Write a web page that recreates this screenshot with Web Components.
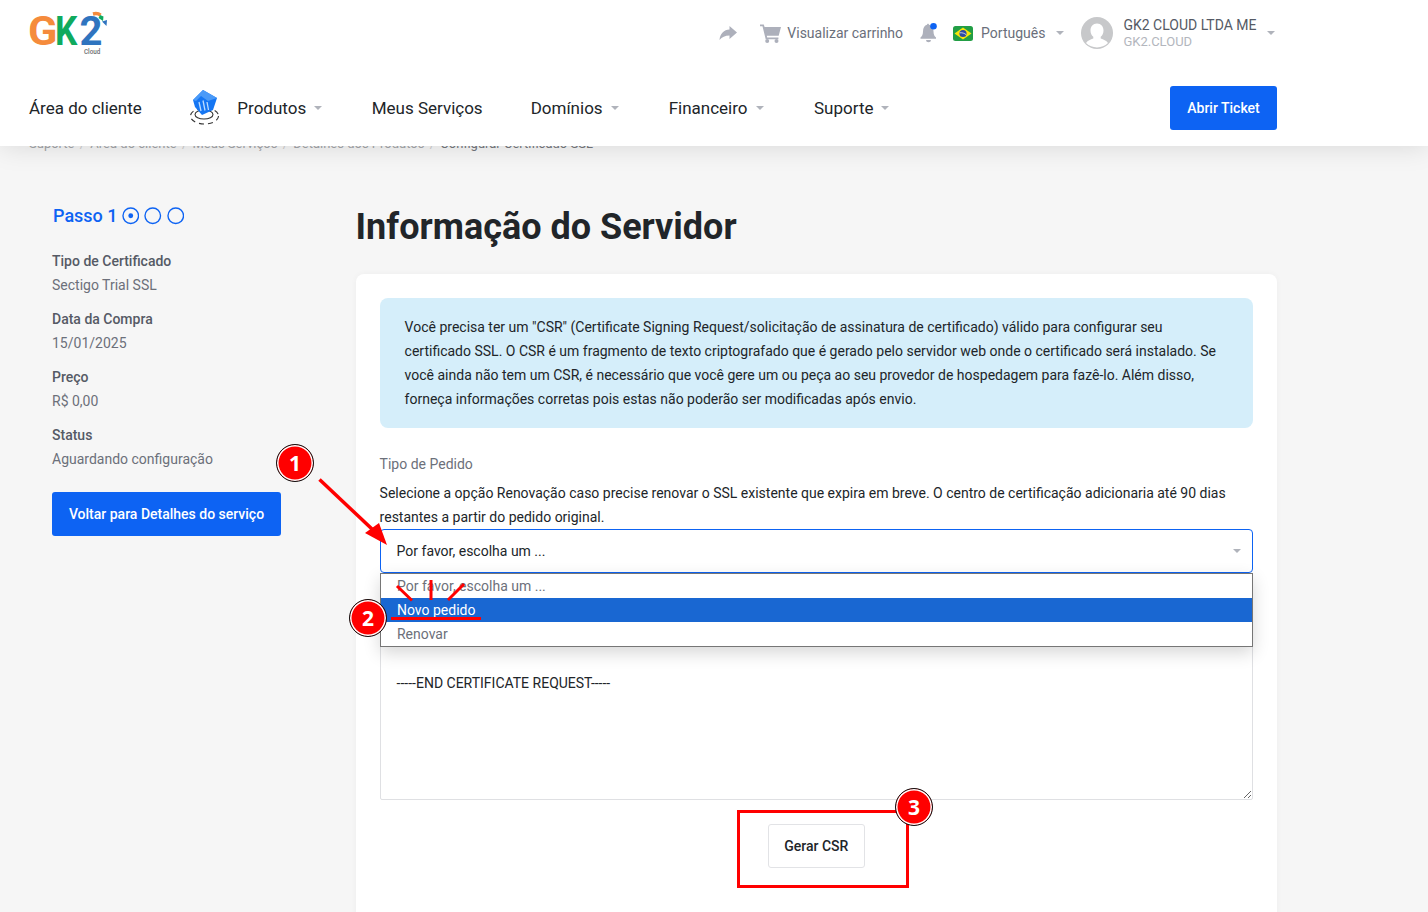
<!DOCTYPE html>
<html lang="pt-BR">
<head>
<meta charset="utf-8">
<title>Informação do Servidor</title>
<style>
html,body{margin:0;padding:0;height:912px;overflow:hidden;background:#f6f6f6;font-family:Roboto,"Liberation Sans",sans-serif;font-size:14px;color:#212529}
</style>
</head>
<body>
<site-header>
  <top-bar slot="top"></top-bar>
  <main-nav slot="nav"></main-nav>
</site-header>
<bread-crumbs></bread-crumbs>
<page-layout>
  <side-panel slot="side"></side-panel>
  <server-form slot="main"></server-form>
</page-layout>
<guide-overlay></guide-overlay>

<script>
function def(name, html){
  customElements.define(name, class extends HTMLElement{
    constructor(){super();this.attachShadow({mode:'open'}).innerHTML=html;}
  });
}
const caret=(c='#b0b3bb')=>`<svg width="8" height="4" viewBox="0 0 8 4" style="display:block"><path d="M0 0h8L4 4z" fill="${c}"/></svg>`;

def('site-header',`<style>
:host{display:block;position:relative;z-index:2;background:#fff;height:146px;box-shadow:0 0 26px rgba(0,0,0,.13)}
.in{width:1248px;margin-left:29px;display:flex;flex-direction:column}
</style><div class="in"><slot name="top"></slot><slot name="nav"></slot></div>`);

def('top-bar',`<style>
:host{display:flex;align-items:flex-start;height:65px;justify-content:space-between;font-size:14px;color:#6a6f7b}
.logo{position:relative;display:block;width:80px;height:56px;margin-top:9px;font:700 40px/28px Roboto,sans-serif;white-space:nowrap}
.word{position:absolute;left:-1.500px;top:9px;display:flex}
.word span{display:block;transform-origin:0 50%}
.g{color:#f58b3c;width:27.500px;transform:scaleX(1.080)}
.k{color:#0faa5e;width:24.500px;transform:scaleX(.88)}
.two{color:#2f74bf}
.cloud{position:absolute;left:55px;top:38.500px;font:500 6.300px/8px Roboto,sans-serif;color:#6d6f72}
.arc{position:absolute;left:64px;top:2px;overflow:visible}
.right{display:flex;align-items:center;height:66px;padding-right:2.500px;box-sizing:border-box}
.i{display:block;flex:none}
.share{margin-right:23px}.cart{margin-right:6px}.bell{margin:0 16px 0 17px}.flag{margin-right:8px}
.c1{margin:0 17px 0 11px}
.ava{margin-right:10px}
.who{display:flex;flex-direction:column;margin-right:10px}
.who b{font-weight:400;font-size:14px;line-height:18px;color:#555a65}
.who span{font-size:13px;line-height:16px;color:#b3b6bd}
</style>
<a class="logo" aria-label="GK2 Cloud">
  <span class="word"><span class="g">G</span><span class="k">K</span><span class="two">2</span></span>
  <svg class="arc" width="15" height="16" viewBox="0 0 15 16"><path d="M0 3c3-.8 5.500-.5 7.500 1.200" fill="none" stroke="#f58b3c" stroke-width="3.500"/><path d="M7 4l3.500 1.500-.5 4.500-4.500-3z" fill="#0faa5e"/><path d="M9 10.500l5-1.500-.5 6z" fill="#2f74bf"/></svg>
  <span class="cloud">Cloud</span>
</a>
<div class="right">
  <svg class="i share" width="18" height="14" viewBox="0 0 18 14"><path d="M10.500 0L18 6.500 10.500 13V9.500C6 9.500 3 11 .5 14 1 8 5 3.500 10.500 3.500z" fill="#adb0bb"/></svg>
  <svg class="i cart" width="21" height="19" viewBox="0 0 21 19"><path d="M0 .500h3.800l.8 2.500H21l-2.300 8.700H6.800l.4 1.800h11.200v1.800H5.700L2.500 2.300H0z" fill="#adb0bb"/><circle cx="7.200" cy="17" r="2" fill="#adb0bb"/><circle cx="16.500" cy="17" r="2" fill="#adb0bb"/></svg>
  <span>Visualizar carrinho</span>
  <svg class="i bell" width="17" height="20" viewBox="0 0 17 20"><path d="M7 1.800c0-1.500 2-1.500 2 0C12 2.500 13.500 5 13.500 8.500c0 3.300 1 4.500 2.500 6v1.200H.5v-1.200C2 13 3 11.800 3 8.500 3 5 4.500 2.500 7 1.800z" fill="#adb0bb"/><path d="M6 17h5a2.500 2.300 0 0 1-5 0z" fill="#adb0bb"/><circle cx="13.500" cy="3.300" r="3.300" fill="#0d63f3"/></svg>
  <svg class="i flag" width="20" height="15" viewBox="0 0 20 15"><rect width="20" height="15" rx="2.500" fill="#229e45"/><path d="M10 1.500L18.500 7.500 10 13.500 1.500 7.500z" fill="#f8e509"/><circle cx="10" cy="7.500" r="3.600" fill="#2b49a3"/><path d="M6.600 6.800c2.500-.3 4.900.4 6.700 2" stroke="#fff" fill="none" stroke-width=".7"/></svg>
  <span>Português</span>
  <span class="c1">${caret()}</span>
  <svg class="i ava" width="32" height="32" viewBox="0 0 32 32"><circle cx="16" cy="16" r="16" fill="#c7c8ca"/><path d="M16 6.500c4 0 6.500 3 6.500 7 0 2.800-1.200 5-2.800 6.300v1.800c2.800 1 5.500 2 7.300 4.400a16 16 0 0 1-22 0c1.800-2.400 4.500-3.400 7.300-4.400v-1.800C10.700 18.500 9.500 16.300 9.500 13.500c0-4 2.500-7 6.500-7z" fill="#fff"/></svg>
  <div class="who"><b>GK2 CLOUD LTDA ME</b><span>GK2.CLOUD</span></div>
  ${caret()}
</div>`);

def('nav-link',`<style>
:host{display:inline-flex;align-items:center;font-size:17px;color:#212529;white-space:nowrap}
.c{margin-left:8px;display:none}
:host([menu]) .c{display:block}
</style><slot></slot><span class="c">${caret()}</span>`);

def('main-nav',`<style>
:host{display:flex;align-items:center;height:44px;margin-top:21px;position:relative}
.basket{margin:0 15.500px 0 47px;flex:none;display:block;overflow:visible}
.a{margin-right:49.500px}
.m{margin-right:48px}
.b{margin-right:50px}
.f{margin-right:50.500px}
.btn{margin-left:auto;width:107px;height:44px;background:#0d63f3;color:#fff;border-radius:3px;font:500 14px/44px Roboto,sans-serif;text-align:center}
</style>
<nav-link>Área do cliente</nav-link>
<svg class="basket" width="33" height="34" viewBox="0 0 33 34">
  <ellipse cx="15.500" cy="25" rx="14" ry="8" fill="none" stroke="#333" stroke-width="1.100" stroke-dasharray="5 4"/>
  <ellipse cx="15" cy="23.500" rx="9" ry="4.500" fill="#fff" stroke="#333" stroke-width="1.100"/>
  <path d="M4 9L14 -1 28 7 24 19 13 24 6 16z" fill="#1576f3"/>
  <path d="M4 9L14 -1 28 7 19 10 12 5 7 10z" fill="#4a9af8"/>
  <path d="M10 11l2 9M14 9.500l2 10M18 11l1.500 8" stroke="#bcdcff" stroke-width="1.300" fill="none"/>
</svg>
<nav-link class="a" menu>Produtos</nav-link>
<nav-link class="m">Meus Serviços</nav-link>
<nav-link class="b" menu>Domínios</nav-link>
<nav-link class="f" menu>Financeiro</nav-link>
<nav-link menu>Suporte</nav-link>
<span class="btn">Abrir Ticket</span>`);

def('bread-crumbs',`<style>
:host{display:block;position:relative;z-index:1;height:15px;margin-top:-10px;padding-left:29px;font-size:13px;line-height:16px;color:#a3a5a9;white-space:nowrap}
i{font-style:normal;color:#ccc;margin:0 5.250px}
b{font-weight:400;color:#74777d}
</style>Suporte<i>/</i>Área do cliente<i>/</i>Meus Serviços<i>/</i>Detalhes dos Produtos<i>/</i><b>Configurar Certificado SSL</b>`);

def('page-layout',`<style>
:host{display:grid;grid-template-columns:326.600px 921.400px;margin:0 0 0 29px}
</style><slot name="side"></slot><slot name="main"></slot>`);

def('info-row',`<style>
:host{display:block;margin-bottom:10px;font-size:14px;line-height:24px}
.l{font-weight:500;color:#555a65}.v{color:#6c707a}
</style><div class="l"><slot name="l"></slot></div><div class="v"><slot name="v"></slot></div>`);

def('side-panel',`<style>
:host{display:block;padding:53px 0 0 23px}
.steps{display:flex;align-items:center;height:24px;margin:0 0 21px 1px;color:#0d63f3;font-size:18px;font-weight:500;line-height:24px}
.steps svg{display:block;margin-left:5px}
.steps svg:first-of-type{margin-left:4px}
.btn{display:block;width:229px;height:44px;margin-top:21px;background:#0d63f3;color:#fff;border-radius:3px;font:500 14px/44px Roboto,sans-serif;text-align:center}
</style>
<div class="steps">Passo 1
 <svg width="17.500" height="17.500" viewBox="0 0 18 18"><circle cx="9" cy="9" r="8" fill="none" stroke="#0d63f3" stroke-width="1.400"/><circle cx="9" cy="9" r="2.500" fill="#0d63f3"/></svg>
 <svg width="17.500" height="17.500" viewBox="0 0 18 18"><circle cx="9" cy="9" r="8" fill="none" stroke="#0d63f3" stroke-width="1.400"/></svg>
 <svg width="17.500" height="17.500" viewBox="0 0 18 18"><circle cx="9" cy="9" r="8" fill="none" stroke="#0d63f3" stroke-width="1.400"/></svg>
</div>
<info-row><span slot="l">Tipo de Certificado</span><span slot="v">Sectigo Trial SSL</span></info-row>
<info-row><span slot="l">Data da Compra</span><span slot="v">15/01/2025</span></info-row>
<info-row><span slot="l">Preço</span><span slot="v">R$ 0,00</span></info-row>
<info-row><span slot="l">Status</span><span slot="v">Aguardando configuração</span></info-row>
<span class="btn">Voltar para Detalhes do serviço</span>`);

def('server-form',`<style>
:host{display:block;padding-top:54px}
h1{margin:0 0 25px;font:700 36px/44px Roboto,sans-serif;color:#212529}
.card{background:#fff;border-radius:8px;padding:24px;height:700px;box-sizing:border-box;box-shadow:0 0 6px rgba(0,0,0,.04)}
.alert{background:#d5eefa;border-radius:8px;padding:17px 25px;line-height:24px;color:#212529}
.lab{margin-top:24px;line-height:24px;color:#6c707a}
.desc{margin-top:5px;line-height:24px;color:#212529}
.wrap{position:relative}
.sel{display:flex;align-items:center;justify-content:space-between;height:44px;box-sizing:border-box;border:1px solid #0d63f3;border-radius:4px;padding:0 11px 0 16px;color:#212529;background:#fff}
.drop{position:absolute;left:0;right:0;top:44px;z-index:2;background:#fff;border:1px solid #767676;box-shadow:0 6px 16px rgba(0,0,0,.16);color:#6c707a;line-height:24px}
.drop div{height:24px;padding-left:16.400px}
.drop .on{background:#1967d2;color:#fff}
textarea{display:block;width:100%;height:213px;box-sizing:border-box;margin-top:14px;padding:83px 16px 0;border:1px solid #dfe0e3;border-radius:2px;font:14px/24px Roboto,sans-serif;color:#212529;outline:none;background:#fff}
.act{display:flex;justify-content:center;margin-top:24px}
.gen{width:97px;height:44px;box-sizing:border-box;border:1px solid #e2e3e6;border-radius:3px;font:500 14px/42px Roboto,sans-serif;color:#212529;text-align:center;background:#fff}
</style>
<h1>Informação do Servidor</h1>
<div class="card">
  <div class="alert">Você precisa ter um "CSR" (Certificate Signing Request/solicitação de assinatura de certificado) válido para configurar seu certificado SSL. O CSR é um fragmento de texto criptografado que é gerado pelo servidor web onde o certificado será instalado. Se você ainda não tem um CSR, é necessário que você gere um ou peça ao seu provedor de hospedagem para fazê-lo. Além disso, forneça informações corretas pois estas não poderão ser modificadas após envio.</div>
  <div class="lab">Tipo de Pedido</div>
  <div class="desc">Selecione a opção Renovação caso precise renovar o SSL existente que expira em breve. O centro de certificação adicionaria até 90 dias restantes a partir do pedido original.</div>
  <div class="wrap">
    <div class="sel"><span>Por favor, escolha um ...</span>${caret()}</div>
    <div class="drop"><div>Por favor, escolha um ...</div><div class="on">Novo pedido</div><div>Renovar</div></div>
    <textarea readonly>-----END CERTIFICATE REQUEST-----</textarea>
  </div>
  <div class="act"><span class="gen">Gerar CSR</span></div>
</div>`);

def('step-badge',`<style>
:host{position:absolute;display:flex;align-items:center;justify-content:center;width:38px;height:38px;box-sizing:border-box;border-radius:50%;background:#f00;border:1px solid #111;box-shadow:inset 0 0 0 1.500px #fff;color:#fff;font:700 21px/38px "Open Sans",sans-serif;left:var(--x);top:var(--y)}
</style><slot></slot>`);

def('guide-overlay',`<style>
:host{position:absolute;left:0;top:0;width:1428px;height:912px;z-index:5;pointer-events:none}
svg{position:absolute;left:0;top:0}
</style>
<svg width="1428" height="912" viewBox="0 0 1428 912">
  <g stroke="#f00" fill="none" stroke-width="3">
    <path d="M319.500 479.500L372 529" stroke-width="3.500"/>
    <path d="M397 586l15 14.500M431 580v20M464 584l-16 16M391 618.500h90"/>
    <rect x="738.500" y="811.500" width="169" height="75"/>
  </g>
  <path d="M387 545L365 533 379 523z" fill="#f00"/>
</svg>
<step-badge style="--x:276px;--y:444px">1</step-badge>
<step-badge style="--x:349px;--y:599px">2</step-badge>
<step-badge style="--x:895px;--y:788px">3</step-badge>`);
</script>
</body>
</html>
